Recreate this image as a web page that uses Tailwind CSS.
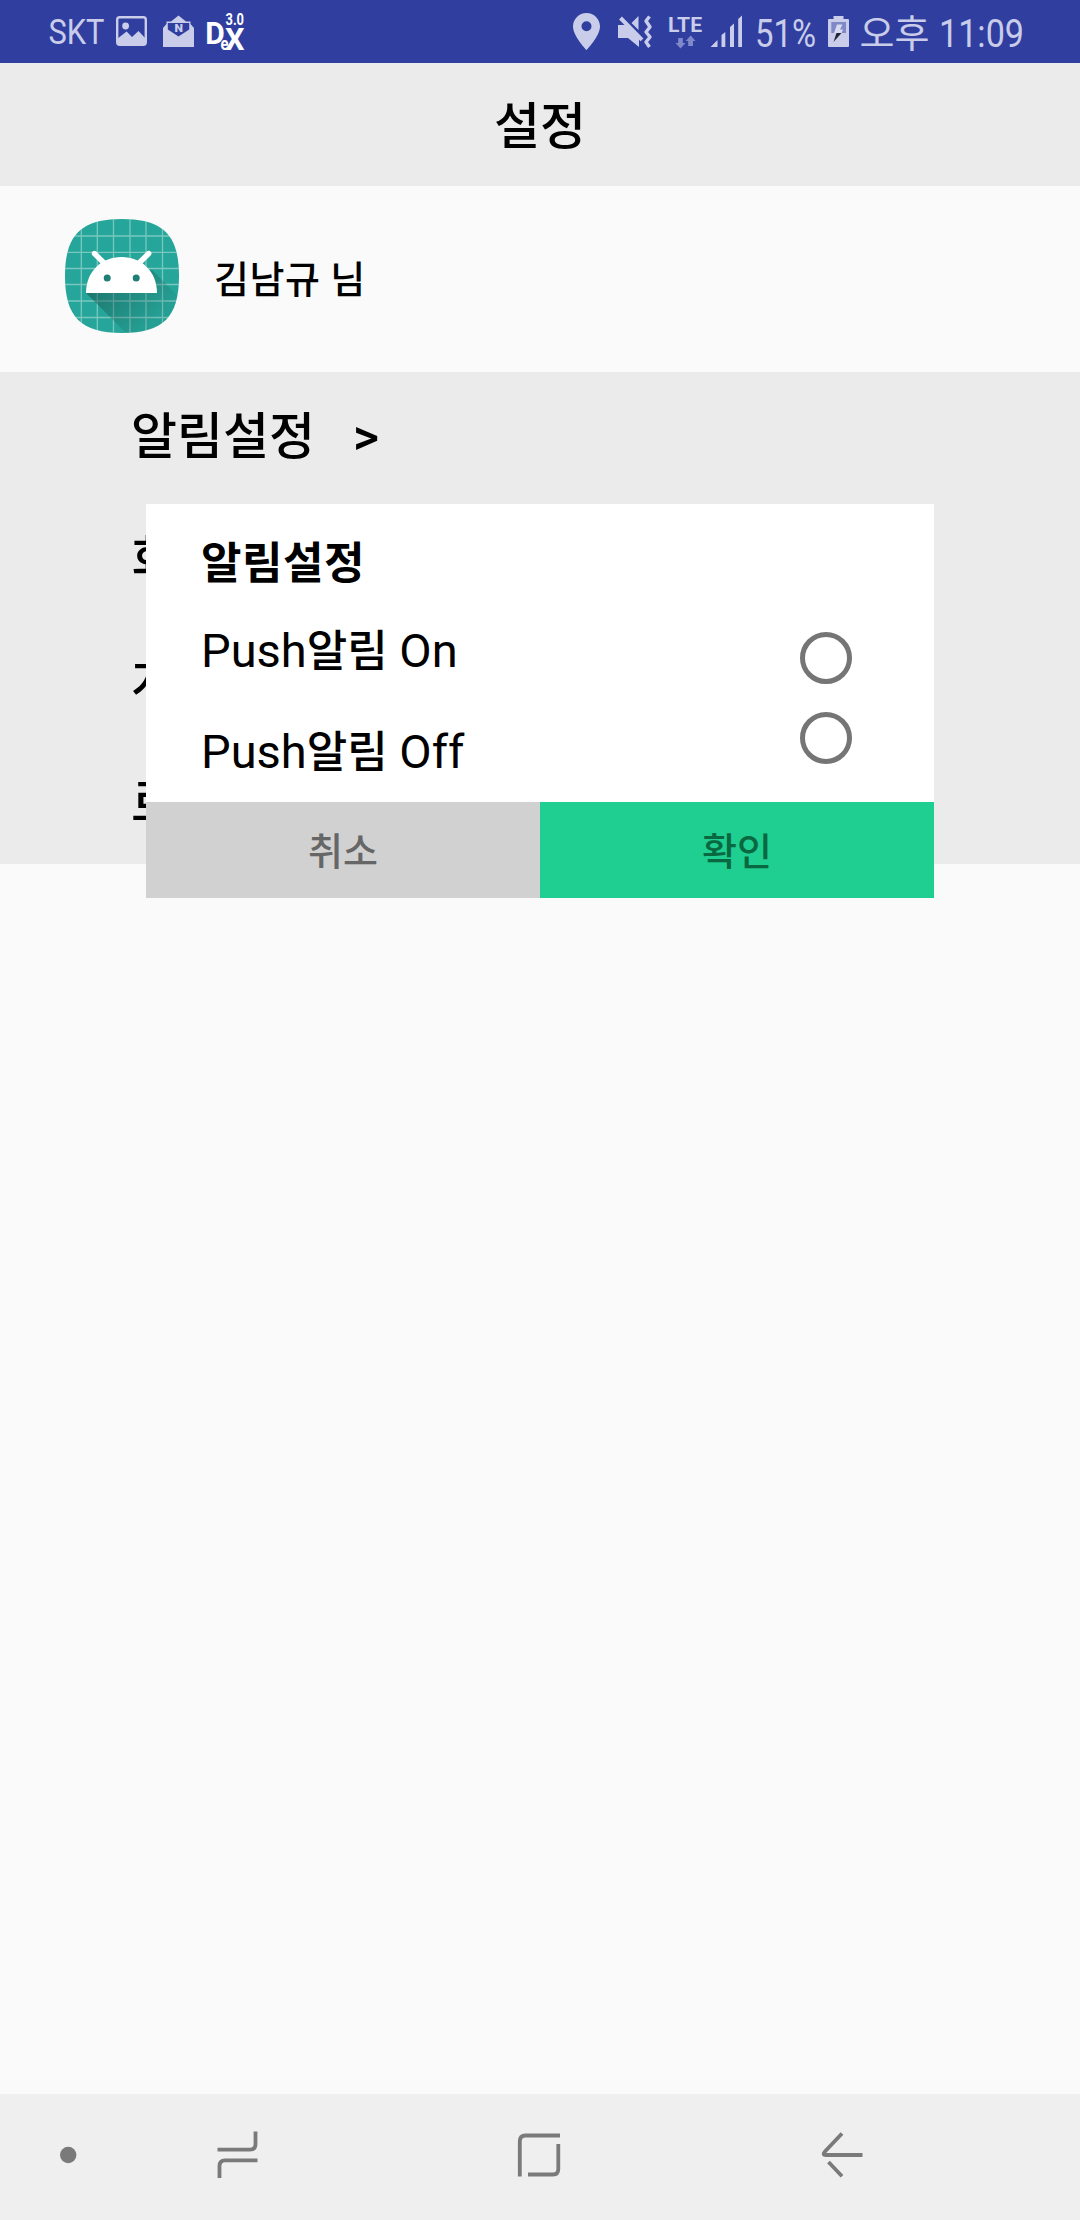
<!DOCTYPE html>
<html lang="ko">
<head>
<meta charset="utf-8">
<title>설정</title>
<script src="https://cdn.jsdelivr.net/npm/@tailwindcss/browser@4"></script>
</head>
<body class="bg-[#fafafa] font-[Roboto,'Noto_Sans_CJK_KR',sans-serif] text-black">
<div class="relative flex h-[2220px] w-[1080px] flex-col overflow-hidden">

  <!-- Status bar -->
  <div class="flex h-[63px] shrink-0 justify-between bg-[#303f9f] pl-12 pr-[50px] text-[#c9cdea]">
    <div class="flex">
      <svg class="overflow-visible" width="62" height="63" viewBox="48 0 62 63"><text x="48.5" y="44" font-size="35" textLength="56" lengthAdjust="spacingAndGlyphs" fill="currentColor">SKT</text></svg>
      <svg width="46" height="63" viewBox="110 0 46 63">
        <rect x="117.2" y="17.2" width="28.6" height="27.6" rx="2.5" fill="none" stroke="currentColor" stroke-width="2.4"/>
        <circle cx="125.6" cy="26" r="3.4" fill="currentColor"/>
        <path d="M117 39L126.600 31.500L132 37L138.500 31L146 39V45H117Z" fill="currentColor"/>
      </svg>
      <svg width="46" height="63" viewBox="156 0 46 63">
        <path d="M163 28L166.500 24V21.500H171L178.500 15.500L186 21.500H190.500V24L194 28V47H163Z" fill="currentColor"/>
        <path d="M167.800 23H189.200V29.500L178.500 36.500L167.800 29.500Z" fill="#303f9f"/>
        <text x="174.500" y="31.500" font-size="10.500" font-weight="900" textLength="8.500" lengthAdjust="spacingAndGlyphs" fill="currentColor">N</text>
      </svg>
      <svg class="overflow-visible" width="50" height="63" viewBox="202 0 50 63" fill="#fff" font-weight="700">
        <text x="205.300" y="43.500" font-size="32" textLength="19.500" lengthAdjust="spacingAndGlyphs">D</text>
        <text x="220.500" y="49.500" font-size="19" textLength="8" lengthAdjust="spacingAndGlyphs">e</text>
        <text x="225" y="49.800" font-size="32" textLength="19.500" lengthAdjust="spacingAndGlyphs">X</text>
        <text x="225.500" y="25" font-size="16.500" textLength="18.500" lengthAdjust="spacingAndGlyphs">3.0</text>
      </svg>
    </div>
    <div class="flex">
      <svg width="44" height="63" viewBox="566 0 44 63"><path fill-rule="evenodd" d="M586.500 13C579 13 573 19 573 26.400C573 36 586.500 50 586.500 50S600 36 600 26.400C600 19 594 13 586.500 13ZM586.500 31.200A5 5 0 1 1 586.500 21.200A5 5 0 0 1 586.500 31.200Z" fill="currentColor"/></svg>
      <svg width="52" height="63" viewBox="610 0 52 63">
        <path d="M618 25H626L639 38V47L628 38H618ZM631.500 23L638.500 16V30Z" fill="currentColor"/>
        <path d="M622.500 16.500L643 38" stroke="#303f9f" stroke-width="3"/>
        <path d="M620.500 18L642 39.800" stroke="currentColor" stroke-width="4"/>
        <path d="M649.500 16.500L646 21L650 27L646 32L650 37L646 42L649.500 47" fill="none" stroke="currentColor" stroke-width="3.400" stroke-linejoin="round"/>
      </svg>
      <svg width="46" height="63" viewBox="662 0 46 63">
        <text x="668" y="31.500" font-size="20" font-weight="700" textLength="34" lengthAdjust="spacingAndGlyphs" fill="currentColor">LTE</text>
        <path d="M678.200 38H682.800V43H685.500L680.500 48.500L675.500 43H678.200ZM688.200 46V41H685.800L690.700 35.500L695.500 41H693V46Z" fill="#7f89ca"/>
      </svg>
      <svg width="44" height="63" viewBox="708 0 44 63"><path d="M710.500 47L717.500 40V47ZM721.500 47V35L725.300 32V47ZM730 47V27L734 23.500V47ZM738.200 47V19L742 15.500V47Z" fill="currentColor"/></svg>
      <svg class="overflow-visible" width="70" height="63" viewBox="752 0 70 63"><text x="755" y="47" font-size="38.500" textLength="61" lengthAdjust="spacingAndGlyphs" fill="currentColor">51%</text></svg>
      <svg width="34" height="63" viewBox="822 0 34 63">
        <path d="M833.500 16H843.500V19H848Q849 19 849 20V46Q849 47 848 47H829Q828 47 828 46V20Q828 19 829 19H833.500Z" fill="currentColor"/>
        <rect x="831.300" y="22" width="14.700" height="11" fill="#7f89c8"/>
        <path d="M837 24.500H842.500L840 29.500H843L841.500 33H834Z" fill="#d8dbf0"/>
        <path d="M836.500 33H841.500L833.500 42Z" fill="#20243c"/>
      </svg>
      <svg class="overflow-visible" width="80" height="63" viewBox="856 0 80 63"><text x="859.500" y="46.500" font-size="38" textLength="70" lengthAdjust="spacingAndGlyphs" fill="currentColor" class="font-['Noto_Sans_CJK_KR',sans-serif]">오후</text></svg>
      <svg class="overflow-visible" width="94" height="63" viewBox="936 0 94 63"><text x="939" y="47" font-size="38.500" textLength="85" lengthAdjust="spacingAndGlyphs" fill="currentColor">11:09</text></svg>
    </div>
  </div>

  <!-- Title -->
  <header class="flex h-[123px] shrink-0 items-center justify-center bg-[#ebebeb] pt-1">
    <h1 class="text-[50px] font-medium leading-none">설정</h1>
  </header>

  <!-- Profile -->
  <section class="flex h-[186px] shrink-0 items-center pl-[65px]">
    <svg class="-mt-1.5 shrink-0" width="114" height="114" viewBox="65 219 114 114">
      <defs>
        <clipPath id="squircle"><path d="M122 219C163 219 179 235 179 276S163 333 122 333S65 317 65 276S81 219 122 219Z"/></clipPath>
        <linearGradient id="shade" gradientUnits="userSpaceOnUse" x1="100" y1="275" x2="150" y2="325"><stop offset="0" stop-color="#174f49" stop-opacity=".55"/><stop offset="1" stop-color="#174f49" stop-opacity=".08"/></linearGradient>
      </defs>
      <g clip-path="url(#squircle)">
        <rect x="65" y="219" width="114" height="114" fill="#26a69a"/>
        <path d="M81.300 219V333M97.300 219V333M113.500 219V333M130 219V333M146 219V333M162.500 219V333M65 236H179M65 252.300H179M65 268.500H179M65 284.500H179M65 301H179M65 317.500H179" stroke="#fff" stroke-opacity=".38" stroke-width="1.300"/>
        <path d="M86 293L128 335H181V299L152 270Z" fill="url(#shade)"/>
      </g>
      <path d="M86 293C86 272 101 257 121.500 257S157 272 157 293Z" fill="#fff"/>
      <path d="M94.500 253.500L106 265M148.700 253.500L137 265" stroke="#fff" stroke-width="5.400" stroke-linecap="round"/>
      <circle cx="107.200" cy="278" r="3.500" fill="#1f7f76"/><circle cx="136.200" cy="278" r="3.500" fill="#1f7f76"/>
    </svg>
    <span class="ml-[35px] pt-0.5 text-[38px] font-medium leading-none tracking-[0.5px]">김남규 님</span>
  </section>

  <!-- Menu -->
  <nav class="flex h-[492px] shrink-0 flex-col bg-[#ebebeb] pl-[131px] pt-[3px] text-[50px] font-medium leading-none">
    <div class="flex h-[123px] items-center gap-[38px]"><span>알림설정</span><span>&gt;</span></div>
    <div class="flex h-[123px] items-center">회원정보</div>
    <div class="flex h-[123px] items-center">개인정보</div>
    <div class="flex h-[120px] items-center">로그아웃</div>
  </nav>

  <main class="flex-1"></main>

  <!-- Dialog -->
  <div role="dialog" class="absolute left-[146px] top-[504px] flex h-[394px] w-[788px] flex-col bg-white">
    <div class="flex h-[298px] justify-between pl-[55px] pr-[82px]">
      <div class="flex flex-col pt-[38px] leading-none">
        <h2 class="text-[44px] font-bold leading-none tracking-[0.5px]">알림설정</h2>
        <p class="mt-[41px] h-[47px] text-[47px] leading-none">Push<span class="text-[44px] font-medium">알림</span> On</p>
        <p class="mt-[54px] h-[47px] text-[47px] leading-none">Push<span class="text-[44px] font-medium">알림</span> Off</p>
      </div>
      <div class="flex flex-col gap-7 pt-[128px]">
        <span class="size-[52px] rounded-full border-[5px] border-[#757575]"></span>
        <span class="size-[52px] rounded-full border-[5px] border-[#757575]"></span>
      </div>
    </div>
    <div class="grid h-24 grid-cols-2 text-[38px] font-medium leading-none">
      <button class="bg-[#d1d1d1] pt-1 text-[#666]">취소</button>
      <button class="bg-[#1fce91] pt-1 text-[#09683f]">확인</button>
    </div>
  </div>

  <!-- Navigation bar -->
  <footer class="flex h-[126px] shrink-0 bg-[#efefef] text-[#7a7a7a]">
    <svg width="136" height="126" viewBox="0 2094 136 126"><circle cx="68.200" cy="2155" r="8.200" fill="currentColor"/></svg>
    <svg width="204" height="126" viewBox="136 2094 204 126" fill="none" stroke="currentColor" stroke-width="3.800"><path d="M217.500 2149.700H250Q255.500 2149.700 255.500 2144V2131.500M219.500 2178V2166Q219.500 2160.300 225 2160.300H257.500"/></svg>
    <svg width="400" height="126" viewBox="340 2094 400 126" fill="none" stroke="currentColor" stroke-width="3.800"><path d="M519.800 2176.500V2141.500Q519.800 2135.500 525.500 2135.500H560M558.300 2144V2169Q558.300 2174.500 553 2174.500H528"/></svg>
    <svg width="340" height="126" viewBox="740 2094 340 126" fill="none" stroke="currentColor" stroke-width="3.800"><path d="M842 2133.500L825 2151.500Q822 2155 826 2155H862.500M828.500 2162L842 2176.300"/></svg>
  </footer>
</div>
</body>
</html>
